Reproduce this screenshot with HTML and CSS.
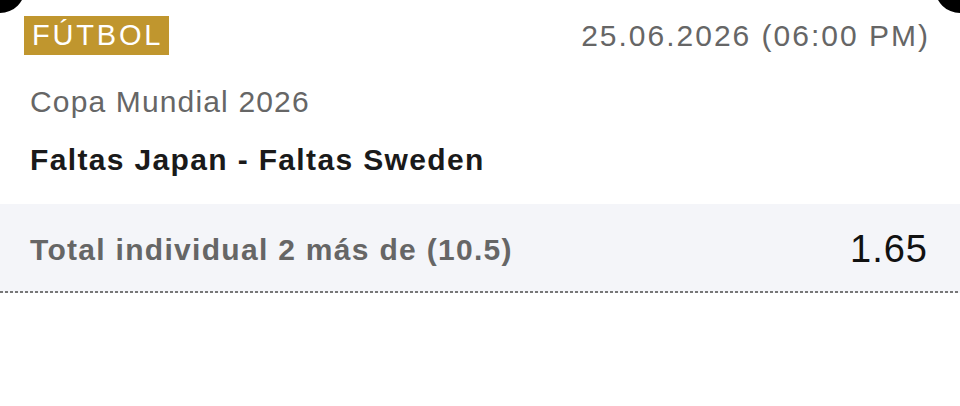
FILE: index.html
```html
<!DOCTYPE html>
<html lang="es">
    <head>
        <meta charset="utf-8">
        <title>Apuesta</title>
        <link rel="stylesheet" href="styles.css">
    </head>
    <body>
        <div class="ticket">
            <div class="ticket-head">
                <span class="sport-tag">FÚTBOL</span>
                <span class="event-date">25.06.2026 (06:00 PM)</span>
            </div>
            <div class="league">Copa Mundial 2026</div>
            <div class="match">Faltas Japan - Faltas Sweden</div>
            <div class="pick">
                <span class="pick-name">Total individual 2 más de (10.5)</span>
                <span class="pick-odds">1.65</span>
            </div>
        </div>
    </body>
</html>
```

FILE: styles.css
```css
* {
    font-family: 'Liberation Sans', Arial, sans-serif;
    box-sizing: border-box;
}

body {
    margin: 0;
    background-color: white;
}

.ticket {
    position: relative;
    width: 960px;
    height: 406px;
    overflow: hidden;
    background-color: white;
}

/* cutouts at the top corners */
.ticket::before,
.ticket::after {
    content: '';
    position: absolute;
    top: -37px;
    width: 50px;
    height: 50px;
    border-radius: 50%;
    background-color: black;
}
.ticket::before {
    left: -25px;
}
.ticket::after {
    right: -25px;
}

.ticket-head {
    display: flex;
    justify-content: space-between;
    align-items: center;
    padding: 16px 30px 0 24px;
}

.sport-tag {
    background-color: #c0962e;
    color: white;
    font-size: 29px;
    letter-spacing: 2.8px;
    line-height: 39px;
    padding: 0 6px 0 8px;
}

.event-date {
    color: #666;
    font-size: 30px;
    letter-spacing: 2px;
}

.league {
    color: #666;
    font-size: 30px;
    letter-spacing: 1.15px;
    padding: 30px 0 0 30px;
}

.match {
    color: #1a1a1a;
    font-size: 30px;
    font-weight: bold;
    letter-spacing: 1.35px;
    padding: 24px 0 0 30px;
}

.pick {
    display: flex;
    justify-content: space-between;
    align-items: center;
    height: 89px;
    margin-top: 27px;
    padding: 2px 32px 0 30px;
    background-color: #f4f5f9;
    background-image: repeating-linear-gradient(to right, #777 0 3px, transparent 3px 5px);
    background-size: 100% 2px;
    background-position: bottom;
    background-repeat: no-repeat;
}

.pick-name {
    color: #666;
    font-size: 30px;
    font-weight: bold;
    letter-spacing: 1.3px;
}

.pick-odds {
    color: #111;
    font-size: 38px;
    letter-spacing: 1px;
}
```
